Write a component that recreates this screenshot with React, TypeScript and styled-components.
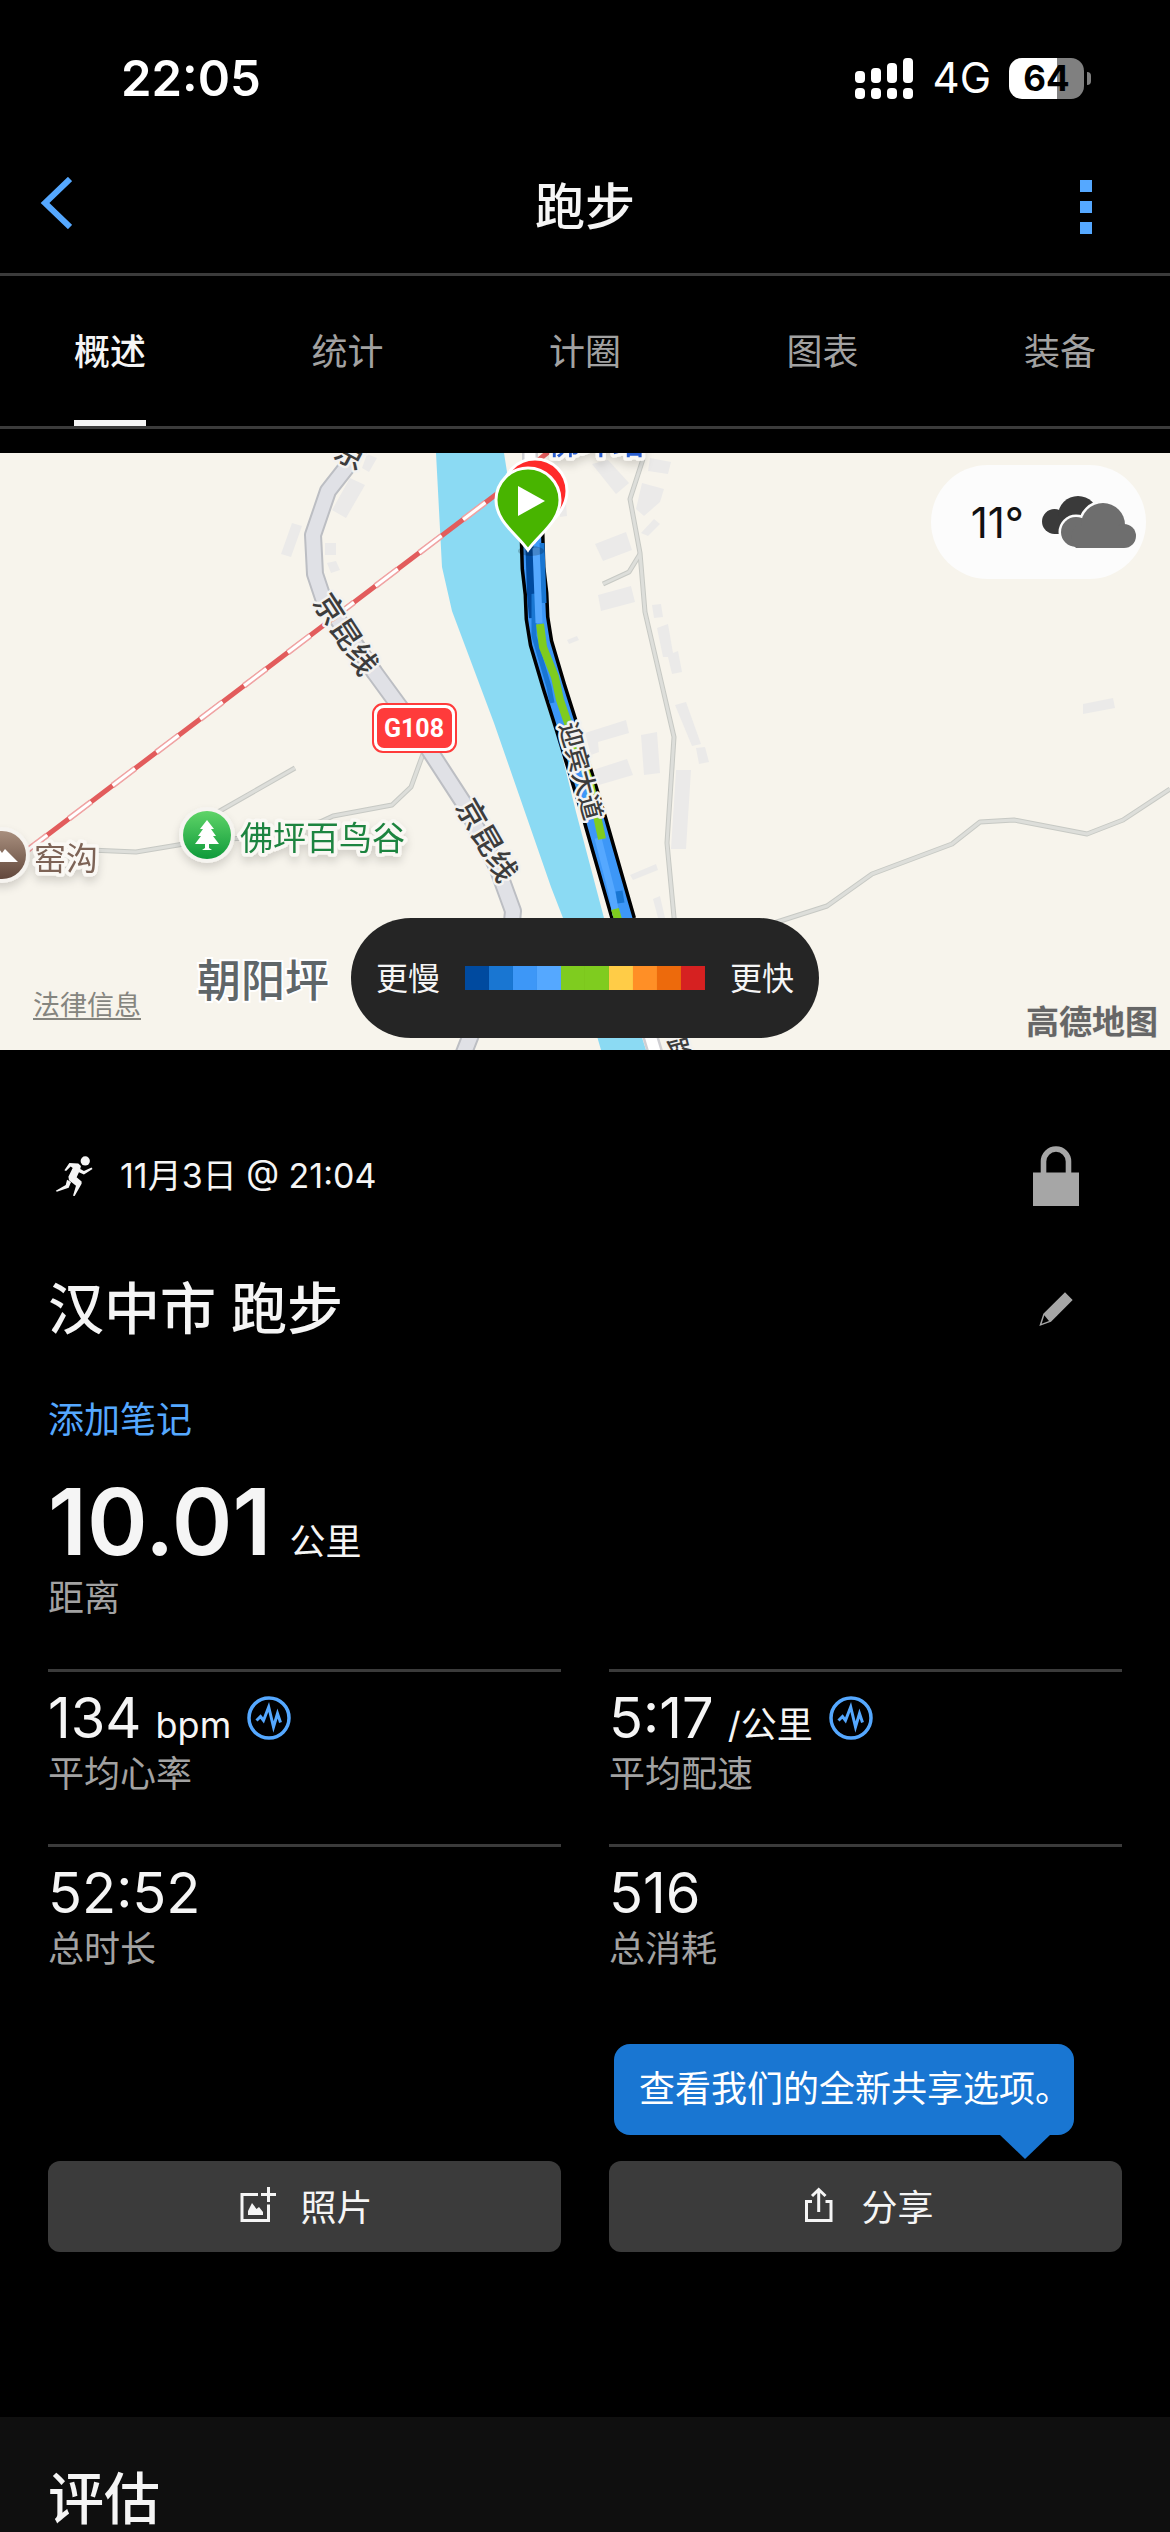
import React from "react";
import styled, { createGlobalStyle } from "styled-components";

const blue = "#55a8ff";
const line = "#3b3b3b";
const muted = "#a2a2a2";
const sans = `Inter, "Noto Sans CJK SC", sans-serif`;

const GlobalStyle = createGlobalStyle`
  *, *::before, *::after { box-sizing: border-box; }
  body { margin: 0; background: #000; color: #f5f5f5; font-family: ${sans}; }
  button { border: 0; padding: 0; background: none; color: inherit; font: inherit; cursor: pointer; }
  h1, h2, p, dl, dt, dd { margin: 0; font-weight: inherit; }
  svg { display: block; }
`;

const Page = styled.div`
  display: flex;
  flex-direction: column;
  min-height: 100vh;
  overflow: hidden;
`;

/* Status bar */
const StatusBar = styled.div`
  display: flex;
  align-items: center;
  justify-content: space-between;
  height: 156px;
  padding: 0 79px 0 121px;
  color: #fff;
`;
const Clock = styled.time`
  font-size: 49px;
  font-weight: 600;
`;
const StatusIcons = styled.div`
  display: flex;
  align-items: center;
`;
const Network = styled.span`
  margin: 0 18px 0 20px;
  font-size: 42px;
  line-height: 42px;
`;
const Battery = styled.span`
  display: grid;
  place-items: center;
  width: 75px;
  height: 41px;
  border-radius: 13px;
  background: linear-gradient(90deg, #fff 64%, #808080 64%);
  color: #000;
  font-size: 35px;
  font-weight: 700;
  line-height: 41px;
`;
const BatteryTip = styled.span`
  width: 4px;
  height: 13px;
  margin-left: 3px;
  border-radius: 0 6px 6px 0;
  background: #808080;
`;

/* Navigation */
const NavBar = styled.header`
  display: grid;
  grid-template-columns: 1fr auto 1fr;
  align-items: center;
  height: 120px;
  padding-bottom: 15px;
  border-bottom: 3px solid ${line};
`;
const NavTitle = styled.h1`
  font-size: 50px;
  font-weight: 500;
  line-height: 60px;
`;
const BackButton = styled.button`
  justify-self: start;
  padding: 0 39px 8px;
`;
const MoreButton = styled.button`
  display: grid;
  gap: 9px;
  justify-self: end;
  padding: 0 78px;
`;
const Dot = styled.span`
  width: 12px;
  height: 12px;
  background: ${blue};
`;
const Tabs = styled.nav`
  display: flex;
  justify-content: space-between;
  height: 153px;
  padding: 0 74px;
  border-bottom: 3px solid ${line};
`;
const Tab = styled.button<{ $active: boolean }>`
  padding-top: 2px;
  border-bottom: 6px solid ${(p) => (p.$active ? "#f5f5f5" : "transparent")};
  color: ${(p) => (p.$active ? "#f5f5f5" : muted)};
  font-size: 36px;
  font-weight: ${(p) => (p.$active ? 500 : 400)};
`;

/* Map */
const MapPanel = styled.section`
  position: relative;
  height: 597px;
  margin-top: 24px;
  overflow: hidden;
  background: #f7f4ec;
`;
const MapDrawing = styled.svg`
  width: 100%;
  height: 100%;
`;
const WeatherBadge = styled.div`
  position: absolute;
  top: 12px;
  right: 24px;
  display: flex;
  align-items: center;
  gap: 18px;
  height: 114px;
  padding: 0 10px 0 40px;
  border-radius: 57px;
  background: #fcfcfc;
  color: #111;
  font-size: 42px;
`;
const LegalLink = styled.a`
  position: absolute;
  left: 33px;
  bottom: 26px;
  color: #85857f;
  font-size: 27px;
  line-height: 36px;
  text-underline-offset: 3px;
`;
const MapCredit = styled.span`
  position: absolute;
  right: 12px;
  bottom: 8px;
  color: #666;
  font-size: 33px;
  font-weight: 700;
  line-height: 40px;
  -webkit-text-stroke: 1px #e8e6e0;
  paint-order: stroke;
`;
const PaceLegend = styled.div`
  position: absolute;
  left: 50%;
  bottom: 12px;
  display: flex;
  align-items: center;
  gap: 25px;
  height: 120px;
  padding: 0 25px;
  border-radius: 60px;
  background: #252525;
  font-size: 32px;
  white-space: nowrap;
  transform: translateX(-50%);
`;
const PaceLabel = styled.span`
  padding-bottom: 4px;
`;
const PaceScale = styled.div`
  display: flex;
`;
const PaceStep = styled.span<{ $color: string }>`
  width: 24px;
  height: 24px;
  background: ${(p) => p.$color};
`;

/* Summary */
const Summary = styled.main`
  padding: 96px 48px 165px;
`;
const Row = styled.div<{ $top?: number }>`
  display: flex;
  align-items: center;
  justify-content: space-between;
  margin-top: ${(p) => p.$top ?? 0}px;
`;
const Stamp = styled.p`
  display: flex;
  align-items: center;
  gap: 26px;
  padding-left: 6px;
  font-size: 34px;
  line-height: 40px;
`;
const SideIcon = styled.button`
  display: grid;
  place-items: center;
  width: 46px;
  height: 60px;
  margin-right: 43px;
`;
const Heading = styled.h2`
  font-size: 56px;
  font-weight: 500;
  line-height: 66px;
`;
const NoteButton = styled.button`
  display: block;
  margin-top: 56px;
  color: ${blue};
  font-size: 36px;
  line-height: 44px;
`;
const Stat = styled.div`
  display: flex;
  flex-direction: column-reverse;
`;
const MainStat = styled(Stat)`
  gap: 8px;
  margin-top: 34px;
`;
const GridStat = styled(Stat)`
  gap: 6px;
  padding: 18px 0 48px;
  border-top: 3px solid ${line};
`;
const StatLabel = styled.dt`
  color: ${muted};
  font-size: 36px;
  line-height: 44px;
`;
const StatValue = styled.dd<{ $large?: boolean }>`
  display: flex;
  align-items: baseline;
  height: ${(p) => (p.$large ? 92 : 56)}px;
  font-size: ${(p) => (p.$large ? 92 : 56)}px;
  font-weight: ${(p) => (p.$large ? 600 : 400)};
  line-height: ${(p) => (p.$large ? 92 : 56)}px;
`;
const Unit = styled.span<{ $gap: number }>`
  margin-left: ${(p) => p.$gap}px;
  font-size: 36px;
  font-weight: 400;
  line-height: 44px;
`;
const InfoButton = styled.button`
  align-self: center;
  margin-left: 16px;
`;
const Columns = styled.dl`
  display: grid;
  grid-template-columns: 1fr 1fr;
  column-gap: 48px;
  margin-top: 49px;
`;
const Actions = styled.div`
  display: grid;
  grid-template-columns: 1fr 1fr;
  column-gap: 48px;
  margin-top: 142px;
`;
const ActionCell = styled.div`
  position: relative;
`;
const ActionButton = styled.button`
  display: flex;
  align-items: center;
  justify-content: center;
  gap: 24px;
  width: 100%;
  height: 91px;
  padding: 0 0 3px 4px;
  border-radius: 12px;
  background: ${line};
  font-size: 36px;
`;
const Tip = styled.div`
  position: absolute;
  right: 48px;
  bottom: 117px;
  height: 91px;
  padding: 0 3px 0 25px;
  border-radius: 16px;
  background: #1976d2;
  color: #fff;
  font-size: 36px;
  line-height: 91px;
  white-space: nowrap;

  &::after {
    content: "";
    position: absolute;
    top: 100%;
    right: 24px;
    border: solid transparent;
    border-width: 24px 25px 0;
    border-top-color: #1976d2;
  }
`;
const Evaluation = styled.section`
  flex: 1;
  padding: 49px 48px 0;
  background: #0f0f0f;
`;

const paceColors = [
  "#004a9f", "#1976d2", "#3d97f7", "#55a8ff", "#7fcc1f",
  "#7fcc1f", "#ffcc47", "#ff8f26", "#ed6a0c", "#d62121",
];

const buildings = [
  "367,1 377,5 369,19 362,15",
  "350,25 365,32 346,65 332,57",
  "292,70 302,73 291,104 281,101",
  "325,90 336,90 336,102 325,102",
  "327,110 336,108 340,117 331,120",
  "592,11 608,7 629,30 616,41",
  "650,5 671,9 668,21 648,18",
  "642,30 664,36 660,49 644,63 636,56",
  "654,66 660,71 648,83 641,80",
  "595,91 626,79 632,97 603,108",
  "598,142 631,133 635,149 601,158",
  "652,152 661,151 663,164 654,165",
  "657,175 668,171 673,200 678,198 682,219 672,221 668,204 663,204",
  "675,252 686,249 701,291 692,293",
  "696,295 705,294 709,309 699,311",
  "676,317 691,317 686,396 671,396",
  "641,282 657,279 660,320 644,322",
  "585,280 626,267 629,280 598,289 599,299 591,302",
  "593,317 627,306 633,322 599,332",
  "630,422 656,411 658,417 633,427",
  "653,446 660,443 665,465 658,465",
  "1083,251 1113,245 1115,255 1083,261",
  "567,187 577,183 579,187 569,191",
  "560,50 566,50 567,63 560,64",
];

const lanes = [
  "M295 315L218 359L184 391L136 399L90 397",
  "M184 391L260 383L320 369L333 363L392 352L411 334L423 301",
  "M643 6L630 46L640 100L645 159L674 284L667 390L675 475",
  "M640 101L629 119L603 131",
  "M675 500L777 469L827 453L872 421L952 391L980 369L1014 367L1087 381L1123 367L1170 336",
];

const highway = "M356 -8L346 15L328 38L313 82L315 121L323 145L375 220L413 272L463 349L497 414L513 458L511 480L465 597L460 610";
const railway = "M25 399L498 40L552 -4";
const track = "M532 80L533 115L536 141L537 165L541 190L554 234L567 275L595 367L624 468";
const pin = "M528 97C518 82 496 69 496 47A32 32 0 0 1 560 47C560 69 538 82 528 97Z";

function RoadLabel({ x, y, angle, size, children }: { x: number; y: number; angle: number; size: number; children: string }) {
  return (
    <text
      transform={`translate(${x} ${y}) rotate(${angle})`}
      textAnchor="middle"
      dominantBaseline="central"
      fontSize={size}
      fontWeight={500}
      fill="#3c3c3c"
      stroke="#f3f2f0"
      strokeWidth={5}
      paintOrder="stroke"
      strokeLinejoin="round"
    >
      {children}
    </text>
  );
}

function RouteMap() {
  return (
    <MapDrawing viewBox="0 0 1170 597" preserveAspectRatio="xMidYMid slice" role="img" aria-label="跑步路线">
      <defs>
        <linearGradient id="park" x1="0" y1="0" x2="0" y2="1">
          <stop offset="0" stopColor="#5fd468" />
          <stop offset="1" stopColor="#0f9a3a" />
        </linearGradient>
        <linearGradient id="hill" x1="0" y1="0" x2="0" y2="1">
          <stop offset="0" stopColor="#a88f7e" />
          <stop offset="1" stopColor="#62483c" />
        </linearGradient>
        <filter id="soft" x="-30%" y="-30%" width="160%" height="160%">
          <feDropShadow dx="0" dy="5" stdDeviation="4" floodOpacity="0.15" />
        </filter>
      </defs>
      <g fill="#ebeae9">
        {buildings.map((p) => <polygon key={p} points={p} />)}
      </g>
      <path
        d="M436 0L442 114L452 158L494 270L551 434L563 465L601 597H646L604 465L576 359L559 290L543 240L530 193L524 145L521 90L507 19L504 0Z"
        fill="#8bdaf3"
      />
      <g fill="none" strokeLinejoin="round">
        <path d="M530 -2V30M625 500L656 602" stroke="#cfcfd3" strokeWidth="16" />
        <path d="M530 -2V30M625 500L656 602" stroke="#fff" strokeWidth="11" />
        {lanes.map((d) => <path key={d} d={d} stroke="#c7c9c4" strokeWidth="5" />)}
        {lanes.map((d) => <path key={d} d={d} stroke="#dddeda" strokeWidth="3" />)}
        <path d={highway} stroke="#bcbec3" strokeWidth="18" />
        <path d={highway} stroke="#e0e1e6" strokeWidth="14" />
        <path d={railway} stroke="#e25c5c" strokeWidth="5" />
        <path d={railway} stroke="#f0a3a3" strokeWidth="6" strokeDasharray="28 27" />
        <path d={railway} stroke="#fff" strokeWidth="3" strokeDasharray="28 27" />
        <path d={track} stroke="#000" strokeWidth="25" />
        <path d={track} stroke="#3d97f7" strokeWidth="18" />
        <path d="M529 80L531 141L533 165" stroke="#004a9f" strokeWidth="8" />
        <path d="M534 141L534 183L549 234L552 250M542 90L544 150" stroke="#1976d2" strokeWidth="5" />
        <path d="M536 95L539 170M598 385L612 440L616 462" stroke="#55a8ff" strokeWidth="7" />
        <path d="M540 171L543 194L555 224L560 247L570 276L590 330L602 386M615 456L619 470" stroke="#7fcc1f" strokeWidth="8" />
        <path d="M619 438L621 450" stroke="#1976d2" strokeWidth="7" />
      </g>

      <RoadLabel x={351} y={1} angle={28} size={30}>京</RoadLabel>
      <RoadLabel x={346} y={181} angle={57} size={30}>京昆线</RoadLabel>
      <RoadLabel x={487} y={387} angle={60} size={30}>京昆线</RoadLabel>
      <RoadLabel x={581} y={318} angle={75} size={25}>迎宾大道</RoadLabel>
      <RoadLabel x={679} y={597} angle={75} size={25}>路</RoadLabel>

      <rect x="373" y="251" width="83" height="48" rx="10" fill="#fff" stroke="#ff3b3b" strokeWidth="2" />
      <rect x="377" y="255" width="75" height="40" rx="7" fill="#ff3b3b" />
      <text x="414" y="284" textAnchor="middle" fill="#fff" fontSize="25" fontWeight="700" fontFamily="Roboto, sans-serif">G108</text>

      <g filter="url(#soft)">
        <circle cx="207" cy="382" r="28" fill="#f6f4f0" />
        <circle cx="2" cy="402" r="28" fill="#f6f4f0" />
      </g>
      <circle cx="207" cy="382" r="24" fill="url(#park)" />
      <path d="M207 367L214 376H211L216 383H213L219 391H209V395L212 397H202L205 395V391H195L201 383H198L203 376H200Z" fill="#fff" />
      <circle cx="2" cy="402" r="24" fill="url(#hill)" />
      <path d="M-14 409L-3 393L2 400L5 396L18 409Z" fill="#fff" />

      <g paintOrder="stroke" strokeLinejoin="round" stroke="#faf8f4" strokeWidth="7" filter="url(#soft)">
        <text x="240" y="397" fontSize="33" fill="#1f8440">佛坪百鸟谷</text>
        <text x="34" y="417" fontSize="32" fill="#7d6457">窑沟</text>
        <text x="548" y="1" fontSize="32" fontWeight="500" fill="#2b5fd0">佛坪站</text>
      </g>
      <text x="197" y="544" fontSize="44" fontWeight="500" fill="#5f6669" stroke="#fff" strokeWidth="4" paintOrder="stroke">朝阳坪</text>

      <ellipse cx="531" cy="98" rx="13" ry="5" fill="#000" opacity="0.2" />
      <path d={pin} transform="translate(7 -9)" fill="#ff2a2a" stroke="#fff" strokeWidth="3" />
      <path d={pin} fill="#48b400" stroke="#fff" strokeWidth="3" />
      <path d="M518 33L545 48L518 63Z" fill="#fff" />
    </MapDrawing>
  );
}

function SignalIcon() {
  const tops = [13, 10, 5, 0];
  return (
    <svg width="58" height="41" viewBox="0 0 58 41" fill="#fff" aria-label="信号">
      {tops.map((top, i) => (
        <g key={top}>
          <rect x={i * 16} y={top} width="10" height={25 - top} rx="4" />
          <rect x={i * 16} y="30" width="10" height="11" rx="4" />
        </g>
      ))}
    </svg>
  );
}

function CloudIcon() {
  const front = (
    <>
      <circle cx="34" cy="36" r="15" />
      <circle cx="61" cy="29" r="22" />
      <circle cx="82" cy="40" r="12" />
      <path d="M34 30H82V52H34A15 15 0 0 1 34 30Z" />
    </>
  );
  return (
    <svg width="94" height="52" viewBox="0 0 94 52" aria-label="多云">
      <g fill="#3a3a3a">
        <circle cx="12.5" cy="25.5" r="12.5" />
        <circle cx="36" cy="20" r="20" />
        <path d="M12 20H40V38H12Z" />
      </g>
      <g fill="#fcfcfc" stroke="#fcfcfc" strokeWidth="5">{front}</g>
      <g fill="#6e6e6e">{front}</g>
    </svg>
  );
}

function PulseIcon() {
  return (
    <svg width="44" height="44" viewBox="0 0 44 44" fill="none" stroke={blue} strokeWidth="3">
      <circle cx="22" cy="22" r="20" strokeWidth="3.5" />
      <path d="M9.5 24.5L13.5 20.5L16.5 24.5L21.7 11L26.5 31L30.5 17.5L33.5 26.5" />
    </svg>
  );
}

function Metric({ label, value, unit, gap = 0, info }: { label: string; value: string; unit?: string; gap?: number; info?: boolean }) {
  return (
    <GridStat>
      <StatLabel>{label}</StatLabel>
      <StatValue>
        {value}
        {unit && <Unit $gap={gap}>{unit}</Unit>}
        {info && <InfoButton aria-label={`${label}详情`}><PulseIcon /></InfoButton>}
      </StatValue>
    </GridStat>
  );
}

export default function App() {
  const tabs = ["概述", "统计", "计圈", "图表", "装备"];
  return (
    <Page lang="zh-CN">
      <GlobalStyle />
      <StatusBar>
        <Clock>22:05</Clock>
        <StatusIcons>
          <SignalIcon />
          <Network>4G</Network>
          <Battery>64</Battery>
          <BatteryTip />
        </StatusIcons>
      </StatusBar>

      <NavBar>
        <BackButton aria-label="返回">
          <svg width="33" height="52" viewBox="0 0 33 52" fill="none" stroke={blue} strokeWidth="6">
            <path d="M31 2L6 26L31 50" />
          </svg>
        </BackButton>
        <NavTitle>跑步</NavTitle>
        <MoreButton aria-label="更多"><Dot /><Dot /><Dot /></MoreButton>
      </NavBar>

      <Tabs>
        {tabs.map((t, i) => <Tab key={t} $active={i === 0}>{t}</Tab>)}
      </Tabs>

      <MapPanel>
        <RouteMap />
        <WeatherBadge>11°<CloudIcon /></WeatherBadge>
        <LegalLink href="#legal">法律信息</LegalLink>
        <MapCredit>高德地图</MapCredit>
        <PaceLegend>
          <PaceLabel>更慢</PaceLabel>
          <PaceScale>
            {paceColors.map((c, i) => <PaceStep key={i} $color={c} />)}
          </PaceScale>
          <PaceLabel>更快</PaceLabel>
        </PaceLegend>
      </MapPanel>

      <Summary>
        <Row>
          <Stamp>
            <svg width="40" height="41" viewBox="68 76 120 124" fill="#f5f5f5">
              <circle cx="162" cy="91" r="14" />
              <path d="M99 119L114 97L141 99L149 106L147 115L158 121L181 111L184 115L158 132L143 125L136 140L151 153L151 160L130 197L125 196L134 166L113 149L111 139L124 112L118 108L104 121Z" />
              <path d="M107 148L119 155L112 172L76 184L73 181L103 164Z" />
            </svg>
            11月3日 @ 21:04
          </Stamp>
          <SideIcon aria-label="隐私">
            <svg width="46" height="60" viewBox="68 47 140 182" fill="#a6a6a6">
              <path d="M68 127H208V229H68Z" />
              <path d="M100 130V94A38 38 0 0 1 176 94V130" fill="none" stroke="#a6a6a6" strokeWidth="17" />
            </svg>
          </SideIcon>
        </Row>
        <Row $top={70}>
          <Heading>汉中市 跑步</Heading>
          <SideIcon aria-label="编辑">
            <svg width="34" height="34" viewBox="89 484 102 102" fill="#a6a6a6" fillRule="evenodd">
              <path d="M167 485L190 508L125 573L90 586L102 549ZM105 554L97 579L119 571Z" />
            </svg>
          </SideIcon>
        </Row>
        <NoteButton>添加笔记</NoteButton>

        <dl>
          <MainStat>
            <StatLabel>距离</StatLabel>
            <StatValue $large>10.01<Unit $gap={18}>公里</Unit></StatValue>
          </MainStat>
        </dl>
        <Columns>
          <Metric label="平均心率" value="134" unit="bpm" gap={14} info />
          <Metric label="平均配速" value="5:17" unit="/公里" gap={14} info />
          <Metric label="总时长" value="52:52" />
          <Metric label="总消耗" value="516" />
        </Columns>

        <Actions>
          <ActionButton>
            <svg width="36" height="36" viewBox="0 0 36 36" fill="none" stroke="#f5f5f5" strokeWidth="3">
              <path d="M18 7.5H2V33.5H28.5V17.5M28.5 0V15M21 7.5H36" />
              <path d="M8 28V24L12 16L16.5 22L19 20L23 25V28Z" fill="#f5f5f5" stroke="none" />
            </svg>
            照片
          </ActionButton>
          <ActionCell>
            <Tip role="tooltip">查看我们的全新共享选项。</Tip>
            <ActionButton>
              <svg width="36" height="36" viewBox="0 0 36 36" fill="none" stroke="#f5f5f5" strokeWidth="3">
                <path d="M11 14.5H5.5V33.5H30V14.5H24.5M17.7 25V3M11 9L17.7 2.5L24.5 9" />
              </svg>
              分享
            </ActionButton>
          </ActionCell>
        </Actions>
      </Summary>

      <Evaluation>
        <Heading>评估</Heading>
      </Evaluation>
    </Page>
  );
}
